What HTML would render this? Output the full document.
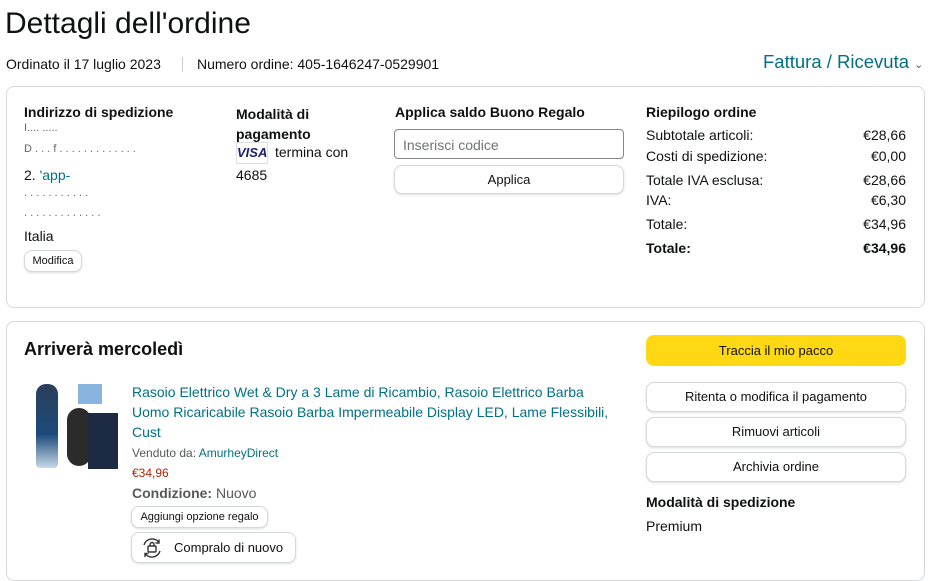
<!DOCTYPE html>
<html><head><meta charset="utf-8"><style>
*{box-sizing:border-box;margin:0;padding:0}
body{width:928px;height:570px;overflow:hidden;background:#fff;font-family:"Liberation Sans","DejaVu Sans",sans-serif;color:#0f1111;position:relative;font-size:14px}
.a{position:absolute;white-space:nowrap}
.b{font-weight:bold}
.box{position:absolute;border:1px solid #d5d9d9;border-radius:8px}
.btn{position:absolute;border:1px solid #d5d9d9;border-radius:8px;background:#fff;text-align:center;font-size:13px;box-shadow:0 1px 2px rgba(15,17,17,.15)}
.link{color:#007185}
</style></head><body>
<div class="a" style="left:5px;top:7px;font-size:30px">Dettagli dell'ordine</div>
<div class="a" style="left:6px;top:56px">Ordinato il 17 luglio 2023</div>
<div class="a" style="left:182px;top:57px;width:1px;height:15px;background:#ccc"></div>
<div class="a" style="left:197px;top:56px">Numero ordine: 405-1646247-0529901</div>
<div class="a link" style="left:763px;top:51px;font-size:18.5px">Fattura / Ricevuta <span style="font-size:11px;color:#555">⌄</span></div>

<div class="box" style="left:6px;top:86px;width:919px;height:222px"></div>
<div class="a b" style="left:24px;top:104px">Indirizzo di spedizione</div>
<div class="a" style="left:24px;top:122px;font-size:11px;color:#666">I....  .....</div>
<div class="a" style="left:24px;top:143px;font-size:11px;color:#666">D . . . f .   . . . . . . . . . . . .</div>
<div class="a" style="left:24px;top:167px">2. <span class="link">'app-</span></div>
<div class="a" style="left:24px;top:187px;font-size:11px;color:#666">. . . .  . . . . . . .</div>
<div class="a" style="left:24px;top:207px;font-size:11px;color:#666">. . . . . .  . . . . . . .</div>
<div class="a" style="left:24px;top:228px">Italia</div>
<div class="btn" style="left:24px;top:250px;width:58px;height:22px;font-size:11px;line-height:20px">Modifica</div>

<div class="a b" style="left:236px;top:104px;line-height:20px">Modalità di<br>pagamento</div>
<div class="a" style="left:236px;top:142px;width:32px;height:22px;border:1px solid #ddd;color:#1a1f71;font-weight:bold;font-style:italic;font-size:13px;text-align:center;line-height:20px">VISA</div>
<div class="a" style="left:275px;top:144px">termina con</div>
<div class="a" style="left:236px;top:167px">4685</div>

<div class="a b" style="left:395px;top:104px">Applica saldo Buono Regalo</div>
<div class="a" style="left:394px;top:129px;width:230px;height:30px;border:1px solid #888;border-radius:4px;padding:7px 8px;color:#6f7373">Inserisci codice</div>
<div class="btn" style="left:394px;top:165px;width:230px;height:29px;line-height:27px">Applica</div>

<div class="a b" style="left:646px;top:104px">Riepilogo ordine</div>
<div class="a" style="left:646px;top:127px">Subtotale articoli:</div><div class="a" style="left:846px;top:127px;width:60px;text-align:right">€28,66</div>
<div class="a" style="left:646px;top:148px">Costi di spedizione:</div><div class="a" style="left:846px;top:148px;width:60px;text-align:right">€0,00</div>
<div class="a" style="left:646px;top:172px">Totale IVA esclusa:</div><div class="a" style="left:846px;top:172px;width:60px;text-align:right">€28,66</div>
<div class="a" style="left:646px;top:192px">IVA:</div><div class="a" style="left:846px;top:192px;width:60px;text-align:right">€6,30</div>
<div class="a" style="left:646px;top:216px">Totale:</div><div class="a" style="left:846px;top:216px;width:60px;text-align:right">€34,96</div>
<div class="a b" style="left:646px;top:240px">Totale:</div><div class="a b" style="left:846px;top:240px;width:60px;text-align:right">€34,96</div>

<div class="box" style="left:6px;top:321px;width:919px;height:260px"></div>
<div class="a b" style="left:24px;top:339px;font-size:18px">Arriverà mercoledì</div>
<div class="a" style="left:36px;top:384px;width:22px;height:84px;background:linear-gradient(#2a3f5a,#1c4a7a 60%,#c8d8e8);border-radius:10px 10px 4px 4px"></div>
<div class="a" style="left:67px;top:408px;width:24px;height:58px;background:#2b2b2b;border-radius:12px"></div>
<div class="a" style="left:88px;top:413px;width:30px;height:56px;background:#1d2a44"></div>
<div class="a" style="left:78px;top:384px;width:24px;height:20px;background:#8ab4e0"></div>
<div class="a link" style="left:132px;top:382px;font-size:14px;line-height:20px;white-space:normal;width:490px">Rasoio Elettrico Wet &amp; Dry a 3 Lame di Ricambio, Rasoio Elettrico Barba Uomo Ricaricabile Rasoio Barba Impermeabile Display LED, Lame Flessibili, Cust</div>
<div class="a" style="left:132px;top:446px;font-size:12px;color:#565959">Venduto da: <span class="link">AmurheyDirect</span></div>
<div class="a" style="left:132px;top:466px;font-size:12px;color:#b12704">€34,96</div>
<div class="a" style="left:132px;top:485px;color:#565959"><b>Condizione:</b> Nuovo</div>
<div class="btn" style="left:131px;top:506px;width:137px;height:22px;font-size:11px;line-height:20px">Aggiungi opzione regalo</div>
<div class="btn" style="left:131px;top:532px;width:165px;height:31px;line-height:29px;font-size:13px;text-align:left;padding-left:42px">Compralo di nuovo</div>
<svg class="a" style="left:140px;top:536px" width="24" height="24" viewBox="0 0 24 24" fill="none" stroke="#333" stroke-width="1.4"><path d="M4 9a8.5 8.5 0 0 1 15-2.5M20 15a8.5 8.5 0 0 1-15 2.5"/><path d="M19 3.5v3.5h-3.5M5 21v-3.5h3.5"/><rect x="8" y="10" width="8" height="6" rx="1"/><path d="M10 10V8.5a2 2 0 0 1 4 0V10"/></svg>

<div class="a" style="left:646px;top:335px;width:260px;height:31px;background:#ffd814;border-radius:8px;text-align:center;line-height:31px;font-size:13px">Traccia il mio pacco</div>
<div class="btn" style="left:646px;top:382px;width:260px;height:30px;line-height:28px">Ritenta o modifica il pagamento</div>
<div class="btn" style="left:646px;top:417px;width:260px;height:30px;line-height:28px">Rimuovi articoli</div>
<div class="btn" style="left:646px;top:452px;width:260px;height:30px;line-height:28px">Archivia ordine</div>
<div class="a b" style="left:646px;top:494px">Modalità di spedizione</div>
<div class="a" style="left:646px;top:518px">Premium</div>
</body></html>
